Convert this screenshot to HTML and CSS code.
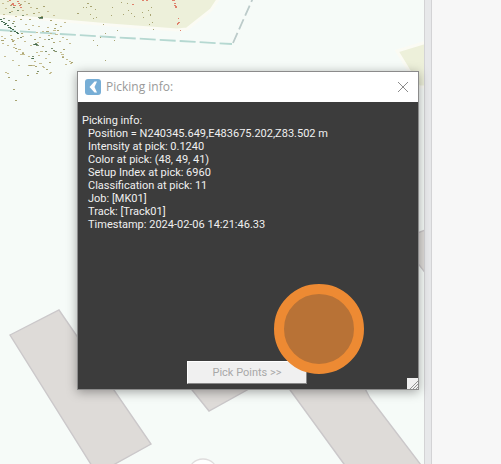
FILE: index.html
```html
<!DOCTYPE html>
<html lang="en">
<head>
<meta charset="utf-8">
<title>Picking info</title>
<link rel="stylesheet" href="styles.css">
</head>
<body>
<main class="workspace">
  <section class="map" aria-label="Map view">
    <svg class="map-art" width="425" height="464" viewBox="0 0 425 464" aria-hidden="true">
      <defs>
        <filter id="soft"><feGaussianBlur stdDeviation="0.7"/></filter>
      </defs>
      <g filter="url(#soft)">
        <path fill="#edf0da" stroke="#fbfbf4" stroke-width="3" d="M-5-5H221L211 10 187 29 177 30 110 25 30 18-5 16z"/>
        <path fill="#edf0da" stroke="#fbfbf4" stroke-width="3" d="M397 51L430 41V87H419z"/>
        <g fill="#dedbd8" stroke="#cbc8ca" stroke-width="1.4">
          <path d="M10 335L59 310 151 444 97 474z"/>
          <path d="M160 350L209 411 256 385 230 340z"/>
          <path d="M285 383L344 464 360 490H440L370 398 362 383z"/>
          <path d="M400 240L430 228V279z"/>
        </g>
        <circle cx="203" cy="474" r="15" fill="#fff" stroke="#dfdddd" stroke-width="1.3"/>
        <path d="M0 30L60 34 110 37 232 44" fill="none" stroke="#b5d8d1" stroke-width="1.8" stroke-dasharray="16 4"/>
        <path d="M233 43L253-2" fill="none" stroke="#bccbca" stroke-width="1.8" stroke-dasharray="11 4"/>
      </g>
      <g fill="none" stroke-width="1">
        <path stroke="#c5bd92" d="M2 3.500h2M7 1.500h2M24 1.500h2M5 8.500h2M11 11.500h2M22 10.500h2M30 7.500h2M3 14.500h2M15 16.500h2M26 14.500h2M38 12.500h2M47 11.500h2M53 15.500h2M1 36.500h2M4 38.500h2M2 43.500h2M7 45.500h2M12 40.500h3M10 35.500h2M17 38.500h2M22 36.500h2M30 35.500h2M36 32.500h2M47 27.500h2M53 30.500h3M60 26.500h2M55 34.500h3M48 35.500h2M50 33.500h2M42 31.500h2M38 26.500h2M32 25.500h2M28 29.500h2M25 24.500h2M64 22.500h2M62 37.500h2M66 39.500h2M69 43.500h2M59 41.500h2M44 39.500h2M39 37.500h2M37 42.500h2M30 45.500h2M24 41.500h2M14 44.500h2M18 49.500h3M22 52.500h2M20 54.500h3M23 54.500h2M13 47.500h2M16 51.500h2M28 56.500h2M36 52.500h2M40 51.500h3M38 55.500h2M45 58.500h2M34 61.500h2M32 65.500h3M28 65.500h3M39 63.500h3M42 66.500h2M61 54.500h3M62 56.500h2M60 52.500h2M66 59.500h2M69 61.500h2M70 63.500h2M65 64.500h2M54 51.500h2M48 54.500h2M50 72.500h2M49 73.500h2M43 67.500h2M7 73.500h2M18 65.500h2M5 72.500h2M12 60.500h2M4 56.500h2"/>
        <path stroke="#a9a572" d="M10 5.500h2M20 4.500h2M28 3.500h2M36 8.500h2M43 6.500h2M33 13.500h2M41 16.500h2M29 19.500h2M20 19.500h2M13 21.500h2M55 24.500h2M50 20.500h2M77 13.500h2M1 40.500h3M11 39.500h2M12 41.500h2M21 33.500h2M34 39.500h2M46 31.500h3M57 30.500h2M54 28.500h2M51 38.500h2M53 42.500h2M42 46.500h2M15 48.500h2M22 53.500h2M29 65.500h3M35 66.500h2M63 49.500h2M62 57.500h2M71 62.500h2M49 62.500h2M46 69.500h2M36 73.500h2M27 75.500h2M8 77.500h2M15 80.500h2M13 89.500h2M15 100.500h2M105 60.500h1M83 7.500h1M87 3.500h2M90 6.500h2M86 7.500h1M95 9.500h1M90 14.500h1M93 18.500h1M96 17.500h1M103 24.500h1M112 7.500h1M111 15.500h1M121 2.500h1M127 3.500h1M128 10.500h1M123 14.500h1M131 13.500h1M134 16.500h1M142 12.500h1M143 17.500h1M148 10.500h1M151 7.500h1M150 14.500h1M150 15.500h1M152 22.500h1M149 24.500h1M153 29.500h1M117 30.500h1M105 33.500h1M100 37.500h1M93 40.500h1M97 45.500h1M114 40.500h1"/>
        <path stroke="#7b9070" d="M3 18.500h2M8 20.500h2M12 23.500h2M14 26.500h2M39 18.500h4M38 17.500h2M33 44.500h5M36 45.500h3M35 43.500h2M51 48.500h2M53 50.500h2M31 58.500h3M32 56.500h2M45 51.500h2M55 51.500h2M48 39.500h2M10 31.500h2M20 37.500h2M37 71.500h2M13 7.500h2M17 10.500h2M22 15.500h2M9 12.500h2"/>
        <path stroke="#426b4e" d="M0 19.500h2M1 21.500h2M3 22.500h2M5 23.500h2M4 24.500h2M7 25.500h2M8 27.500h3M10 28.500h2M12 29.500h2M14 31.500h2M16 32.500h2M17 33.500h2M40 17.500h3M34 44.500h3M32 58.500h2"/>
        <path stroke="#df806b" d="M11 4.500h3M13 5.500h3M12 3.500h2M18 3.500h2M19 5.500h2M20 7.500h2M9 .500h2M17 1.500h2M132 4.500h2M142 .500h2M146 .500h2M172 .500h3M174 3.500h2M174 5.500h2M175 6.500h2M175 7.500h2M178 18.500h1M178 22.500h2M177 23.500h2M177 24.500h1M180 30.500h1"/>
      </g>
    </svg>
  </section>
  <div class="splitter"></div>
  <aside class="side-panel"></aside>
</main>

<section class="dialog" role="dialog" aria-labelledby="dialog-title">
  <header class="title-bar">
    <svg class="app-icon" width="16" height="16" viewBox="0 0 16 16" aria-hidden="true">
      <rect width="16" height="16" rx="3" fill="#77aed6"/>
      <path d="M9.500 2.500H12L9.500 8 12 13.500H9.500L4.500 8z" fill="#fff"/>
    </svg>
    <h1 class="title" id="dialog-title">Picking info:</h1>
    <button class="close" type="button" aria-label="Close">
      <svg width="12" height="12" viewBox="0 0 12 12" aria-hidden="true"><path d="M1 1L11 11M11 1L1 11" stroke="#8c8c8c"/></svg>
    </button>
  </header>
  <div class="body">
    <p class="heading">Picking info:</p>
    <ul class="facts">
      <li>Position = N240345.649,E483675.202,Z83.502 m</li>
      <li>Intensity at pick: 0.1240</li>
      <li>Color at pick: (48, 49, 41)</li>
      <li>Setup Index at pick: 6960</li>
      <li>Classification at pick: 11</li>
      <li>Job: [MK01]</li>
      <li>Track: [Track01]</li>
      <li>Timestamp: 2024-02-06 14:21:46.33</li>
    </ul>
    <button class="pick" type="button" disabled>Pick Points &gt;&gt;</button>
  </div>
  <svg class="grip" width="11" height="11" viewBox="0 0 11 11" aria-hidden="true">
    <path fill="#f0f0f0" d="M0 0h11v11H0z"/>
    <path d="M3 11L11 3M6 11L11 6M9 11L11 9" stroke="#929292"/>
  </svg>
  <span class="click-marker"></span>
</section>
</body>
</html>
```

FILE: styles.css
```css
* {
  box-sizing: border-box;
}

body {
  margin: 0;
  font-family: Roboto, "Liberation Sans", sans-serif;
  font-size: 11px;
  line-height: 13px;
}

.workspace {
  display: grid;
  grid-template-columns: 1fr 8px 69px;
  min-height: 100vh;
}

.map {
  position: relative;
  overflow: hidden;
  background: #f6fbf8;
}

.map-art {
  position: absolute;
  top: 0;
  left: 0;
}

.splitter {
  background: #e7e8ea;
  border: solid #d3d3d5;
  border-width: 0 1px;
}

.side-panel {
  background: #f7f7f7;
}

.dialog {
  position: absolute;
  top: 71px;
  left: 77px;
  width: 342px;
  border: 1px solid #8b8b8b;
  background: #3c3c3c;
  box-shadow: 0 2px 10px rgba(0, 0, 0, 0.35);
}

.title-bar {
  display: flex;
  align-items: center;
  gap: 5px;
  height: 30px;
  padding: 0 8px 0 7px;
  background: #fff;
}

.title {
  flex: 1;
  margin: 0;
  font: 12px/16px "Open Sans", sans-serif;
  color: #999;
}

.close {
  display: flex;
  padding: 1px;
  border: 0;
  background: none;
}

.body {
  display: flex;
  flex-direction: column;
  min-height: 287px;
  padding: 12px 6px 5px 4px;
  color: #f0f0f0;
}

.heading {
  margin: 0;
}

.facts {
  margin: 0;
  padding: 0 0 0 6px;
  list-style: none;
}

.pick {
  align-self: center;
  width: 120px;
  height: 23px;
  margin-top: auto;
  padding: 0;
  border: 1px solid;
  border-color: #fff #888 #888 #fff;
  background: #f0f0f0;
  font: 11px/16px Roboto, sans-serif;
  color: #a8a8a8;
}

.grip {
  position: absolute;
  right: 0;
  bottom: 0;
}

.click-marker {
  position: absolute;
  right: 54px;
  bottom: 15px;
  width: 90px;
  height: 90px;
  border: 10px solid #ed8a33;
  border-radius: 50%;
  background: #b87236;
}
```
